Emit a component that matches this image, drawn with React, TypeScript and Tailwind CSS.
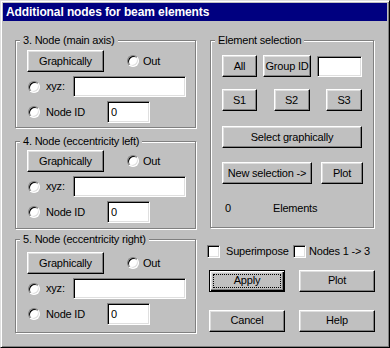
import React from 'react';

const raised =
  'border border-t-white border-l-white border-r-black border-b-black shadow-[inset_-1px_-1px_0_#808080,inset_1px_1px_0_#dfdfdf]';
const sunken =
  'border border-t-[#808080] border-l-[#808080] border-r-white border-b-white shadow-[inset_1px_1px_0_#000,inset_-1px_-1px_0_#dfdfdf]';

function Btn({ label, className = '' }: { label: string; className?: string }) {
  return (
    <button
      type="button"
      className={`flex h-[22px] shrink-0 items-center justify-center bg-[#c0c0c0] leading-none ${raised} ${className}`}
    >
      {label}
    </button>
  );
}

function Radio({ className = '' }: { className?: string }) {
  return (
    <span
      className={`block h-[12px] w-[12px] shrink-0 rounded-full bg-white border border-t-[#808080] border-l-[#808080] border-r-white border-b-white shadow-[inset_1px_1px_0_#000,inset_-1px_-1px_0_#dfdfdf] ${className}`}
    />
  );
}

function Check({ className = '' }: { className?: string }) {
  return <span className={`block h-[13px] w-[13px] shrink-0 bg-white ${sunken} ${className}`} />;
}

function Field({ value = '', className = '' }: { value?: string; className?: string }) {
  return (
    <input
      readOnly
      defaultValue={value}
      className={`shrink-0 bg-white pl-[3px] outline-none ${sunken} ${className}`}
    />
  );
}

interface GroupProps {
  title: string;
  className?: string;
  children: React.ReactNode;
}

function Group({ title, className = '', children }: GroupProps) {
  return (
    <div className={`relative border border-[#808080] shadow-[inset_1px_1px_0_#fff,1px_1px_0_#fff] ${className}`}>
      <span className="absolute -top-[8px] left-[4px] bg-[#c0c0c0] px-[3px] leading-[14px]">{title}</span>
      {children}
    </div>
  );
}

type NodeGroupProps = { title: string; className: string };

function NodeGroup({ title, className }: NodeGroupProps) {
  return (
    <Group title={title} className={`pl-[11px] ${className}`}>
      <div className="flex items-center">
        <Btn label="Graphically" className="w-[77px]" />
        <Radio className="ml-[23px]" />
        <span className="ml-[4px]">Out</span>
      </div>
      <div className="mt-[4px] flex h-[21px] items-center">
        <Radio className="ml-[1px]" />
        <span className="ml-[6px] w-[27px]">xyz:</span>
        <Field className="h-[21px] w-[113px]" />
      </div>
      <div className="mt-[4px] flex h-[22px] items-center">
        <Radio className="ml-[1px]" />
        <span className="ml-[6px] w-[61px]">Node ID</span>
        <Field value="0" className="h-[22px] w-[43px]" />
      </div>
    </Group>
  );
}

export default function App() {
  return (
    <div className="h-[348px] w-[390px] bg-[#c0c0c0] p-[2px] text-[11px] tracking-[-0.2px] text-black font-['Liberation_Sans',Arial,sans-serif] border border-t-[#dfdfdf] border-l-[#dfdfdf] border-r-black border-b-black shadow-[inset_1px_1px_0_#fff,inset_-1px_-1px_0_#808080]">
      <div className="flex h-[18px] items-center bg-[#000080] pl-[3px] text-[12px] font-bold tracking-[-0.1px] text-white">
        Additional nodes for beam elements
      </div>

      <div className="flex pt-[19px]">
        {/* left column */}
        <div className="ml-[12px] flex w-[181px] flex-col">
          <NodeGroup title="3. Node (main axis)" className="h-[88px] pt-[9px]" />
          <NodeGroup title="4. Node (eccentricity left)" className="mt-[13px] h-[88px] pt-[8px]" />
          <NodeGroup title="5. Node (eccentricity right)" className="mt-[10px] h-[94px] pt-[12px]" />
        </div>

        {/* right column */}
        <div className="ml-[11px] flex flex-col">
          <Group title="Element selection" className="ml-[3px] h-[188px] w-[164px] pl-[11px] pt-[14px]">
            <div className="flex items-center">
              <Btn label="All" className="w-[35px]" />
              <Btn label="Group ID" className="ml-[6px] w-[48px]" />
              <Field className="ml-[6px] h-[21px] w-[45px]" />
            </div>
            <div className="mt-[12px] flex w-[140px] justify-between">
              <Btn label="S1" className="w-[35px]" />
              <Btn label="S2" className="w-[36px]" />
              <Btn label="S3" className="w-[36px]" />
            </div>
            <Btn label="Select graphically" className="mt-[15px] w-[140px]" />
            <div className="mt-[14px] flex">
              <Btn label="New selection ->" className="w-[90px]" />
              <Btn label="Plot" className="ml-[9px] w-[42px]" />
            </div>
            <div className="mt-[17px] flex leading-[14px]">
              <span className="ml-[3px] w-[48px]">0</span>
              <span>Elements</span>
            </div>
          </Group>

          <div className="mt-[15px] flex items-center">
            <div className="flex w-[86px] items-center">
              <Check />
              <span className="ml-[6px]">Superimpose</span>
            </div>
            <Check />
            <span className="ml-[3px]">Nodes 1 -&gt; 3</span>
          </div>

          <div className="mt-[10px] flex">
            <button
              type="button"
              className="relative flex h-[22px] w-[76px] ml-[2px] items-center justify-center border border-black bg-[#c0c0c0] leading-none shadow-[inset_1px_1px_0_#fff,inset_-1px_-1px_0_#000,inset_-2px_-2px_0_#808080,inset_2px_2px_0_#dfdfdf]"
            >
              <span className="absolute inset-[3px] border border-dotted border-black" />
              Apply
            </button>
            <Btn label="Plot" className="ml-[14px] w-[76px]" />
          </div>

          <div className="mt-[18px] flex">
            <Btn label="Cancel" className="ml-[2px] w-[76px]" />
            <Btn label="Help" className="ml-[14px] w-[76px]" />
          </div>
        </div>
      </div>
    </div>
  );
}
